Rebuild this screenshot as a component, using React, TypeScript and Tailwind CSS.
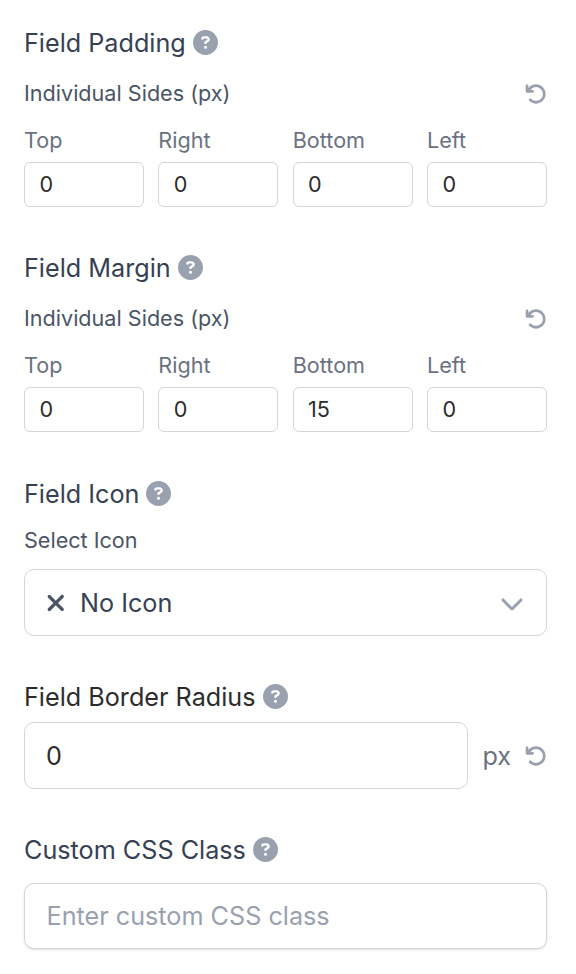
import { useState } from "react";
import type { ReactNode } from "react";
import { FaArrowRotateLeft, FaChevronDown, FaCircleQuestion, FaXmark } from "react-icons/fa6";

type Side = "Top" | "Right" | "Bottom" | "Left";
type SideValues = Record<Side, string>;

const SIDES: Side[] = ["Top", "Right", "Bottom", "Left"];
const DEFAULT_PADDING: SideValues = { Top: "0", Right: "0", Bottom: "0", Left: "0" };
const DEFAULT_MARGIN: SideValues = { Top: "0", Right: "0", Bottom: "15", Left: "0" };

export default function App() {
  const [padding, setPadding] = useState(DEFAULT_PADDING);
  const [margin, setMargin] = useState(DEFAULT_MARGIN);
  const [radius, setRadius] = useState("0");
  const [cssClass, setCssClass] = useState("");

  return (
    <main className="h-[974px] w-[576px] bg-white pt-[25px] pr-[29px] pl-6 font-['Inter',sans-serif] text-gray-700">
      <SpacingSection
        title="Field Padding"
        values={padding}
        onChange={setPadding}
        onReset={() => setPadding(DEFAULT_PADDING)}
      />

      <div className="mt-[43px]">
        <SpacingSection
          title="Field Margin"
          values={margin}
          onChange={setMargin}
          onReset={() => setMargin(DEFAULT_MARGIN)}
        />
      </div>

      <section className="mt-11">
        <SectionTitle>Field Icon</SectionTitle>
        <p className="mt-3 text-[21.6px] leading-8 text-gray-600">Select Icon</p>
        <button
          type="button"
          className="mt-[13px] flex h-[67px] w-full items-center rounded-[10px] border border-gray-300 pr-[22px] pl-[21px] text-left"
        >
          <FaXmark className="h-[26px] w-[19.5px] text-gray-600" />
          <span className="ml-[14.5px] flex-1 pt-0.5 text-[25.2px]">No Icon</span>
          <FaChevronDown className="size-6 text-gray-400" />
        </button>
      </section>

      <section className="mt-[43px]">
        <SectionTitle dark>Field Border Radius</SectionTitle>
        <div className="mt-[7px] flex items-center">
          <input
            value={radius}
            onChange={(e) => setRadius(e.target.value)}
            className="h-[67px] w-[444px] rounded-[10px] border border-gray-300 px-[21px] text-[25.2px] text-[#2c2c2c] outline-none"
          />
          <span className="ml-[14.5px] flex-1 pt-0.5 text-[25.2px] text-gray-500">px</span>
          <ResetButton onClick={() => setRadius("0")} />
        </div>
      </section>

      <section className="mt-[43px]">
        <SectionTitle>Custom CSS Class</SectionTitle>
        <input
          value={cssClass}
          onChange={(e) => setCssClass(e.target.value)}
          placeholder="Enter custom CSS class"
          className="mt-[15px] block h-[66px] w-full rounded-[10px] border border-gray-300 px-[21.5px] text-[25.2px] shadow-sm outline-none placeholder:text-gray-400"
        />
      </section>
    </main>
  );
}

function SectionTitle({ children, dark = false }: { children: ReactNode; dark?: boolean }) {
  return (
    <h2 className={`flex h-9 items-start gap-[7px] text-[25.2px] ${dark ? "text-[#2c2c2c]" : "text-gray-700"}`}>
      <span className="leading-9">{children}</span>
      <FaCircleQuestion className="mt-[5px] size-[25px] text-gray-400" />
    </h2>
  );
}

function ResetButton({ onClick }: { onClick: () => void }) {
  return (
    <button type="button" onClick={onClick} aria-label="Reset" className="block">
      <FaArrowRotateLeft className="size-[22px] text-gray-400" />
    </button>
  );
}

function SpacingSection({
  title,
  values,
  onChange,
  onReset,
}: {
  title: string;
  values: SideValues;
  onChange: (values: SideValues) => void;
  onReset: () => void;
}) {
  return (
    <section>
      <SectionTitle>{title}</SectionTitle>
      <div className="mt-4 flex h-8 items-center justify-between">
        <p className="text-[21.6px] leading-8 text-gray-600">Individual Sides (px)</p>
        <div className="pt-0.5">
          <ResetButton onClick={onReset} />
        </div>
      </div>
      <div className="mt-[15px] grid grid-cols-4 gap-x-[14.4px]">
        {SIDES.map((side) => (
          <label key={side} className="block text-[21.6px] leading-8 text-gray-500">
            {side}
            <input
              value={values[side]}
              onChange={(e) => onChange({ ...values, [side]: e.target.value })}
              className="mt-[6px] block h-[45px] w-full rounded-md border border-gray-300 px-[14.4px] pb-px text-[21.6px] text-[#2c2c2c] outline-none"
            />
          </label>
        ))}
      </div>
    </section>
  );
}
